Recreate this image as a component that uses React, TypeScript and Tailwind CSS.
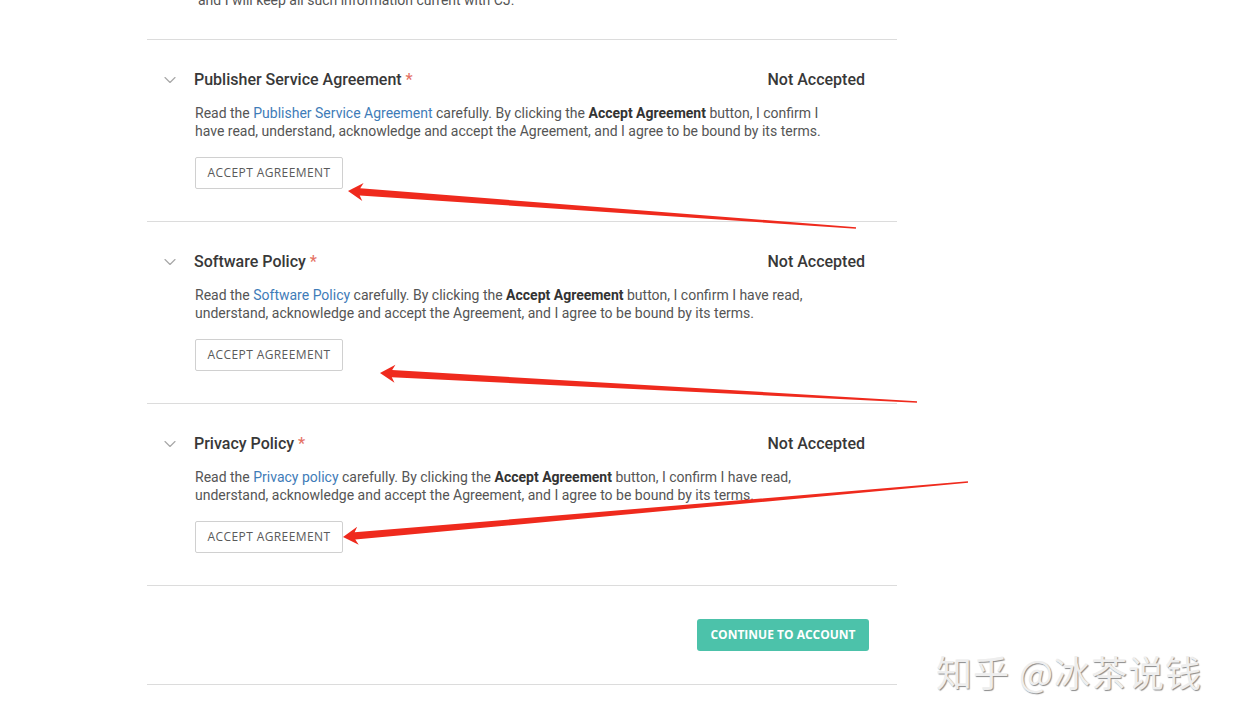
import { ChevronDown } from 'lucide-react'

type Pt = [number, number]

const sections = [
  { title: 'Publisher Service Agreement', link: 'Publisher Service Agreement' },
  { title: 'Software Policy', link: 'Software Policy' },
  { title: 'Privacy Policy', link: 'Privacy policy' },
]

// red annotation arrows drawn over the page, tip first
const arrows: [Pt, Pt][] = [
  [[348, 191], [856, 228]],
  [[380, 373], [917, 402]],
  [[343, 537], [968, 482]],
]

function arrowPoints(tip: Pt, tail: Pt) {
  const dx = tail[0] - tip[0]
  const dy = tail[1] - tip[1]
  const len = Math.hypot(dx, dy)
  const ux = dx / len
  const uy = dy / len
  const nx = -uy
  const ny = ux
  const at = (d: number, w: number): Pt => [tip[0] + ux * d + nx * w, tip[1] + uy * d + ny * w]
  const pts: Pt[] = [
    tip,
    at(15, 9),
    at(12, 3.6),
    [tail[0] + nx * 0.8, tail[1] + ny * 0.8],
    [tail[0] - nx * 0.8, tail[1] - ny * 0.8],
    at(12, -3.6),
    at(15, -9),
  ]
  return pts.map((p) => p.join(',')).join(' ')
}

function Section({ title, link }: { title: string; link: string }) {
  return (
    <div className="flex border-t border-[#dcdcdc] pt-[30px] pb-[32px]">
      <div className="ml-[13px] flex h-[20px] w-[20px] items-center justify-center">
        <ChevronDown size={20} strokeWidth={1.4} className="text-[#a8a8a8]" />
      </div>
      <div className="ml-[14px] flex-1 pr-[32px]">
        <div className="flex h-[20px] items-center justify-between text-[16px] font-medium text-[#383838]">
          <span>
            {title} <span className="text-[#e57366]">*</span>
          </span>
          <span>Not Accepted</span>
        </div>
        <p className="mt-[14px] w-[640px] pl-px text-[14px] leading-[18px] text-[#555]">
          Read the <span className="text-[#3f7cb8]">{link}</span> carefully. By clicking the{' '}
          <b className="font-bold text-[#333]">Accept Agreement</b> button, I confirm I have read, understand,
          acknowledge and accept the Agreement, and I agree to be bound by its terms.
        </p>
        <button className="mt-[17px] ml-px h-[32px] w-[148px] rounded-[2px] border border-[#d0d0d0] bg-white font-['Open_Sans',sans-serif] text-[12px] tracking-[0.4px] text-[#5a5a5a]">
          ACCEPT AGREEMENT
        </button>
      </div>
    </div>
  )
}

export default function App() {
  return (
    <div className="relative h-[722px] w-[1242px] overflow-hidden bg-white font-['Roboto',sans-serif]">
      <div className="ml-[147px] w-[750px]">
        <p className="-mt-[9px] pb-[30px] pl-[51px] text-[14px] leading-[18px] text-[#555]">
          and I will keep all such information current with CJ.
        </p>
        {sections.map((s) => (
          <Section key={s.title} {...s} />
        ))}
        <div className="flex justify-end border-y border-[#dcdcdc] pt-[33px] pb-[33px] pr-[28px]">
          <button className="h-[32px] w-[172px] rounded-[3px] bg-[#4cc2aa] font-['Open_Sans',sans-serif] text-[12px] font-bold text-white">
            CONTINUE TO ACCOUNT
          </button>
        </div>
      </div>

      <svg className="pointer-events-none absolute inset-0" width="1242" height="722">
        {arrows.map(([tip, tail], i) => (
          <polygon key={i} points={arrowPoints(tip, tail)} fill="#ef2a1d" />
        ))}
      </svg>

      <div className="absolute left-[936px] top-[648px] font-['Noto_Sans_CJK_SC',sans-serif] text-[36px] leading-[46px] tracking-[1px] text-[#eeeeee] [text-shadow:1px_1px_1px_#8a8a8a]">
        知乎 @冰茶说钱
      </div>
    </div>
  )
}
